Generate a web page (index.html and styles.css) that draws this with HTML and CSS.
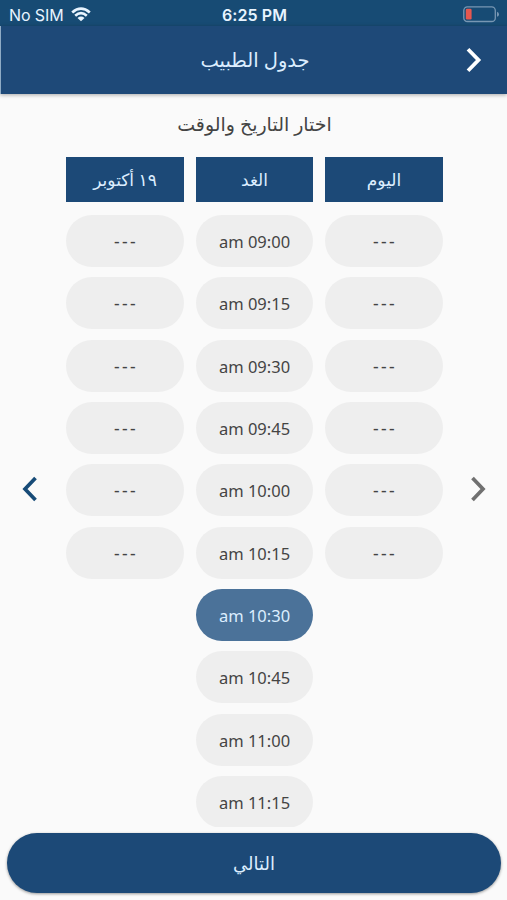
FILE: index.html
```
<!DOCTYPE html>
<html lang="ar">
<head>
<meta charset="utf-8">
<meta name="viewport" content="width=device-width">
<title>جدول الطبيب</title>
<link rel="stylesheet" href="styles.css">
</head>
<body>
<div class="status">
  <div class="carrier"><span>No SIM</span>
    <svg width="20" height="15" viewBox="0 0 20 15" fill="none" stroke="#e8f4ff" stroke-width="2.7"><path d="M1.2 5.4Q10-2.2 18.8 5.4M4.2 8.7Q10 3.7 15.8 8.7"/><path d="M6.5 10.9Q10 8 13.5 10.9L10 14.2Z" fill="#e8f4ff" stroke="none"/></svg>
  </div>
  <div class="clock">6:25 PM</div>
  <svg class="battery" width="37" height="17" viewBox="0 0 37 17"><rect x=".8" y=".9" width="31.5" height="14.6" rx="3.6" fill="none" stroke="#7897b3" stroke-width="1.3"/><rect x="2.8" y="2.8" width="5.8" height="10.8" rx="1.3" fill="#e6574f"/><path d="M34 5.8Q36 6.3 36 8.3T34 10.8Z" fill="#7897b3"/></svg>
</div>
<header class="bar">
  <h1 class="title">جدول الطبيب</h1>
  <svg class="next" width="20" height="28" viewBox="0 0 20 28" fill="none" stroke="#fff" stroke-width="3.8"><path d="M4 3.2L14.5 14L4 24.8"/></svg>
</header>
<main class="main">
  <h2 class="heading">اختار التاريخ والوقت</h2>
  <div class="schedule">
    <svg class="arrow blue" width="16" height="26" viewBox="0 0 16 26"><path d="M13.5 2L3 13L13.5 24"/></svg>
    <div class="days">
      <section class="day">
        <div class="date">١٩ أكتوبر</div>
        <div class="slot empty">---</div><div class="slot empty">---</div><div class="slot empty">---</div><div class="slot empty">---</div><div class="slot empty">---</div><div class="slot empty">---</div>
      </section>
      <section class="day">
        <div class="date">الغد</div>
        <div class="slot">am 09:00</div><div class="slot">am 09:15</div><div class="slot">am 09:30</div><div class="slot">am 09:45</div><div class="slot">am 10:00</div><div class="slot">am 10:15</div><div class="slot selected">am 10:30</div><div class="slot">am 10:45</div><div class="slot">am 11:00</div><div class="slot">am 11:15</div>
      </section>
      <section class="day">
        <div class="date">اليوم</div>
        <div class="slot empty">---</div><div class="slot empty">---</div><div class="slot empty">---</div><div class="slot empty">---</div><div class="slot empty">---</div><div class="slot empty">---</div>
      </section>
    </div>
    <svg class="arrow gray" width="16" height="26" viewBox="0 0 16 26"><path d="M2.5 2L13 13L2.5 24"/></svg>
  </div>
</main>
<footer class="footer"><button class="submit">التالي</button></footer>
</body>
</html>
```
FILE: styles.css
```
* { box-sizing: border-box; }
body {
  margin: 0;
  width: 507px;
  height: 900px;
  overflow: hidden;
  display: flex;
  flex-direction: column;
  background: #fafafa;
  color: #444;
  font-family: "Noto Sans", "DejaVu Sans", sans-serif;
}
.status {
  flex: none;
  height: 26px;
  padding: 3px 7px 0 9px;
  display: grid;
  grid-template-columns: 1fr auto 1fr;
  align-items: center;
  background: #174b74;
  color: #e8f4ff;
  font-family: Inter, sans-serif;
  font-size: 16px;
}
.carrier { display: flex; align-items: center; gap: 7px; letter-spacing: -.1px; }
.clock { font-weight: 600; letter-spacing: .1px; }
.battery { justify-self: end; }
.bar {
  flex: none;
  height: 68px;
  padding: 0 23px 0 45px;
  display: grid;
  grid-template-columns: 1fr 20px;
  align-items: center;
  background: #1e4978;
  border-left: 1px solid #8fabc5;
  box-shadow: 0 1px 4px #0005;
}
.title, .heading { margin: 0; font-weight: 400; text-align: center; direction: rtl; }
.title { color: #dceeff; font-size: 19.5px; line-height: 40px; }
.main { flex: none; height: 733px; overflow: hidden; display: flex; flex-direction: column; }
.heading { height: 63px; flex: none; line-height: 60px; font-size: 19px; padding-left: 2px; }
.schedule {
  padding: 0 21px 0 22px;
  display: flex;
  justify-content: space-between;
}
.arrow { margin-top: 319px; fill: none; stroke-width: 3.7; }
.blue { stroke: #174b77; }
.gray { stroke: #707070; }
.days { display: flex; gap: 12px; align-items: flex-start; padding-left: 1px; }
.day { width: 117.5px; display: flex; flex-direction: column; gap: 10.35px; }
.date {
  height: 45px;
  margin-bottom: 2.5px;
  line-height: 46px;
  text-align: center;
  direction: rtl;
  background: #1c4977;
  color: #dceeff;
  font-size: 17px;
}
.slot {
  height: 52px;
  border-radius: 26px;
  line-height: 53px;
  text-align: center;
  background: #eee;
  font-size: 16.5px;
}
.empty { font-size: 17.5px; letter-spacing: 2.3px; padding-left: 2px; }
.selected { background: #4b7299; color: #dceeff; }
.footer { padding: 6px 6px 7px 7px; }
.submit {
  width: 100%;
  height: 60px;
  border: 0;
  border-radius: 30px;
  background: #1c4977;
  color: #dceeff;
  font: 18px "Noto Sans", "DejaVu Sans", sans-serif;
  box-shadow: 0 1px 3px #0006;
}
```
